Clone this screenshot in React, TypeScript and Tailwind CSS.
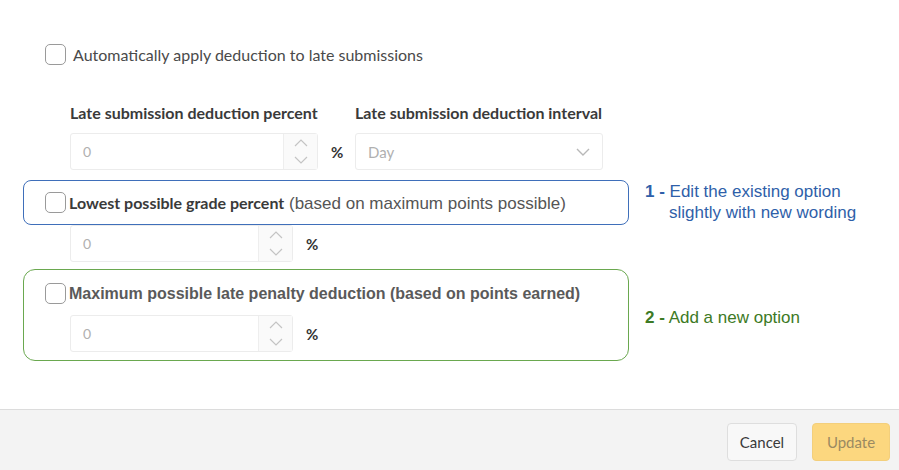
import React from "react"

function Box() {
  return <span className="inline-block w-[21px] h-[21px] shrink-0 rounded-[5px] border border-[#9a9a9a] bg-white" />
}

function Spin({ w }: { w: string }) {
  return (
    <div className={`flex h-[37px] ${w} rounded-[3px] border border-[#ececec] bg-white`}>
      <div className="flex-1 flex items-center pl-[12px] text-[14px] text-[#b0b0b0]">0</div>
      <div className="w-[34px] flex flex-col border-l border-[#eeeeee] bg-[#fafafa]">
        <div className="flex-1 flex items-center justify-center">
          <svg width="14" height="8" viewBox="0 0 14 8" fill="none" stroke="#c4c4c4" strokeWidth="1.2"><path d="M1 7l6-6 6 6" /></svg>
        </div>
        <div className="flex-1 flex items-center justify-center">
          <svg width="14" height="8" viewBox="0 0 14 8" fill="none" stroke="#c4c4c4" strokeWidth="1.2"><path d="M1 1l6 6 6-6" /></svg>
        </div>
      </div>
    </div>
  )
}

export default function App() {
  return (
    <div className="w-[899px] h-[470px] bg-white flex flex-col font-['Lato','Liberation_Sans',sans-serif] text-[#4a4a4a]">
      <div className="flex-1 px-[23px]">
        <div className="mt-[44px] ml-[22px] flex items-center gap-[7px] h-[21px]">
          <Box />
          <span className="text-[16px] leading-[21px]">Automatically apply deduction to late submissions</span>
        </div>

        <div className="ml-[47px] mt-[38px] flex gap-[37px]">
          <div className="w-[248px] text-[16px] font-bold text-[#3a3a3a] leading-[20px]">Late submission deduction percent</div>
          <div className="w-[248px] text-[16px] font-bold text-[#3a3a3a] leading-[20px]">Late submission deduction interval</div>
        </div>
        <div className="ml-[47px] mt-[10px] flex items-center">
          <Spin w="w-[248px]" />
          <span className="ml-[13px] w-[24px] text-[15px] leading-[20px] font-bold text-[#333]">%</span>
          <div className="flex items-center justify-between h-[37px] w-[248px] rounded-[3px] border border-[#ececec] bg-white pl-[12px] pr-[12px]">
            <span className="text-[15px] leading-[20px] text-[#b0b0b0]">Day</span>
            <svg width="14" height="8" viewBox="0 0 14 8" fill="none" stroke="#b8b8b8" strokeWidth="1.4"><path d="M1 1l6 6 6-6" /></svg>
          </div>
        </div>

        <div className="mt-[10px] flex items-start">
          <div className="w-[606px] h-[45px] rounded-[8px] border-[1.5px] border-[#3f6fba] flex items-center pl-[21px] gap-[3px]">
            <Box />
            <span className="leading-[21px] whitespace-nowrap">
              <b className="text-[16px] font-bold text-[#3a3a3a]">Lowest possible grade percent</b>
              <span className="font-['Liberation_Sans',Arial,sans-serif] text-[17px] text-[#555]"> (based on maximum points possible)</span>
            </span>
          </div>
          <div className="ml-[16px] mt-[1px] font-['Liberation_Sans',Arial,sans-serif] text-[17px] leading-[21px] text-[#2f5fa9]">
            <div><b>1 -</b> Edit the existing option</div>
            <div className="pl-[24px]">slightly with new wording</div>
          </div>
        </div>
        <div className="ml-[47px] flex items-center">
          <Spin w="w-[223px]" />
          <span className="ml-[13px] text-[15px] leading-[20px] font-bold text-[#333]">%</span>
        </div>

        <div className="mt-[7px] flex items-center">
          <div className="w-[606px] h-[92px] rounded-[12px] border-[1.5px] border-[#6aa84f] pl-[21px] pt-[13px]">
            <div className="flex items-center gap-[3px] h-[21px]">
              <Box />
              <span className="font-['Liberation_Sans',Arial,sans-serif] text-[16px] leading-[21px] font-bold text-[#5a5a5a]">Maximum possible late penalty deduction (based on points earned)</span>
            </div>
            <div className="ml-[25px] mt-[11px] flex items-center">
              <Spin w="w-[223px]" />
              <span className="ml-[13px] text-[15px] leading-[20px] font-bold text-[#333]">%</span>
            </div>
          </div>
          <div className="ml-[16px] mt-[4px] font-['Liberation_Sans',Arial,sans-serif] text-[17px] leading-[21px] text-[#3d7a25]">
            <b>2 -</b> Add a new option
          </div>
        </div>
      </div>

      <div className="h-[61px] border-t border-[#dcdcdc] bg-[#f3f3f3] flex items-start justify-end pt-[13px] pr-[9px] gap-[15px]">
        <button className="h-[38px] w-[70px] rounded-[4px] border border-[#dedede] bg-[#f8f8f8] text-[15px] text-[#3a3a3a]">Cancel</button>
        <button className="h-[38px] w-[78px] rounded-[4px] border border-[#f3cf7c] bg-[#fcd77f] text-[15px] text-[#9a8a62]">Update</button>
      </div>
    </div>
  )
}
